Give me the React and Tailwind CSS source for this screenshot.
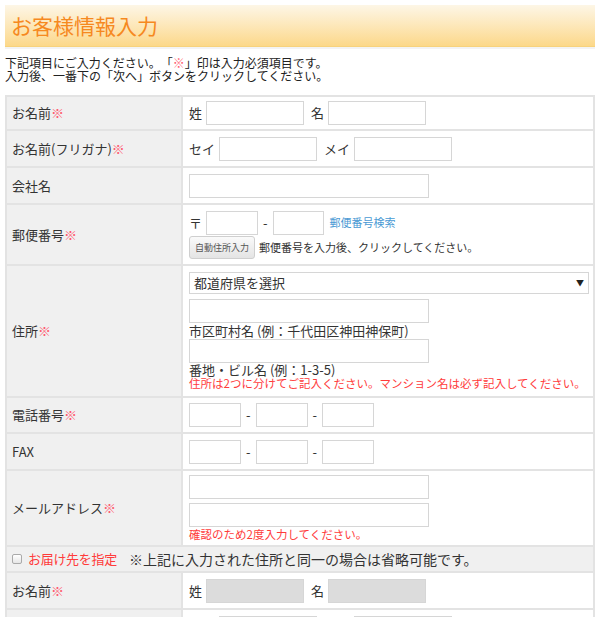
import React from 'react';

const Req = () => <span className="text-[#ff5a6e]">※</span>;

const Input = ({ w = 'w-[98px]', gray = false }) => (
    <input
        type="text"
        className={`${w} h-[24px] border border-[#d6d6d6] ${gray ? 'bg-[#dcdcdc]' : 'bg-white'} outline-none`}
    />
);

// one form row: grey label cell on the left, inputs on the right
const Row = ({ label, required, children, h }) => (
    <div className={`flex ${h} border-b-2 border-[#e3e3e3]`}>
        <div className="w-[176px] shrink-0 bg-[#f0f0f0] border-r-2 border-[#e3e3e3] flex items-center pl-[5px] text-[13px] text-[#333]">
            <span>
                {label}
                {required && <Req />}
            </span>
        </div>
        <div className="flex-1 flex flex-col justify-center pl-[6px] pr-[5px] text-[13px] text-[#333]">{children}</div>
    </div>
);

const Dash = () => <span className="px-[1px]">-</span>;

const App = () => {
    return (
        <div
            className="w-[601px] h-[617px] overflow-hidden bg-white pt-[5px] px-[5px] [text-spacing-trim:space-all]"
            style={{ fontFamily: '"Noto Sans CJK JP", "Noto Sans", sans-serif' }}
        >
            {/* Header */}
            <div className="h-[42px] w-[590px] bg-gradient-to-b from-[#fdf6e6] to-[#fcd889] border-b border-[#f7d27c] flex items-center pl-[6px]">
                <h1 className="text-[21px] text-[#f6891f] font-normal leading-none">お客様情報入力</h1>
            </div>
            <div className="h-[2px] w-[590px] bg-[#f3f3f3]" />

            {/* Intro */}
            <div className="mt-[7px] text-[12px] leading-[13px] text-[#222]">
                <p>下記項目にご入力ください。「<span className="text-[#ff5a6e]">※</span>」印は入力必須項目です。</p>
                <p>入力後、一番下の「次へ」ボタンをクリックしてください。</p>
            </div>

            {/* Form */}
            <div className="mt-[13px] w-[590px] border-t-2 border-x-2 border-[#e3e3e3]">
                <Row label="お名前" required h="h-[34px]">
                    <div className="flex items-center gap-[4px]">
                        <span>姓</span>
                        <Input />
                        <span className="ml-[3px]">名</span>
                        <Input />
                    </div>
                </Row>
                <Row label="お名前(フリガナ)" required h="h-[37px]">
                    <div className="flex items-center gap-[4px]">
                        <span>セイ</span>
                        <Input />
                        <span className="ml-[3px]">メイ</span>
                        <Input />
                    </div>
                </Row>
                <Row label="会社名" h="h-[37px]">
                    <div className="flex">
                        <Input w="w-[240px]" />
                    </div>
                </Row>
                <Row label="郵便番号" required h="h-[61px]">
                    <div className="flex items-center gap-[4px]">
                        <span>〒</span>
                        <Input w="w-[52px]" />
                        <Dash />
                        <Input w="w-[51px]" />
                        <span className="ml-[2px] text-[#4a9ad4] text-[11px]">郵便番号検索</span>
                    </div>
                    <div className="flex items-center gap-[4px] mt-[1px]">
                        <button className="h-[23px] w-[66px] rounded-[3px] border border-[#cfcfcf] bg-gradient-to-b from-[#fafafa] to-[#e4e4e4] text-[9px] leading-none text-[#555]">
                            自動住所入力
                        </button>
                        <span className="text-[11px]">郵便番号を入力後、クリックしてください。</span>
                    </div>
                </Row>
                <Row label="住所" required h="h-[132px]">
                    <div className="h-[22px] w-[400px] border border-[#d6d6d6] flex items-center justify-between px-[4px]">
                        <span className="text-[13px]">都道府県を選択</span>
                        <span className="text-[8px] text-[#222]">▼</span>
                    </div>
                    <div className="flex mt-[5px]">
                        <Input w="w-[240px]" />
                    </div>
                    <div className="text-[13px] leading-[15px]">市区町村名 (例：千代田区神田神保町)</div>
                    <div className="flex mt-[1px]">
                        <Input w="w-[240px]" />
                    </div>
                    <div className="text-[13px] leading-[14px]">番地・ビル名 (例：1-3-5)</div>
                    <div className="text-[11.5px] leading-[13px] whitespace-nowrap text-[#ff3b3b]">
                        住所は2つに分けてご記入ください。マンション名は必ず記入してください。
                    </div>
                </Row>
                <Row label="電話番号" required h="h-[36px]">
                    <div className="flex items-center gap-[4px]">
                        <Input w="w-[52px]" />
                        <Dash />
                        <Input w="w-[52px]" />
                        <Dash />
                        <Input w="w-[52px]" />
                    </div>
                </Row>
                <Row label="FAX" h="h-[37px]">
                    <div className="flex items-center gap-[4px]">
                        <Input w="w-[52px]" />
                        <Dash />
                        <Input w="w-[52px]" />
                        <Dash />
                        <Input w="w-[52px]" />
                    </div>
                </Row>
                <Row label="メールアドレス" required h="h-[76px]">
                    <div className="flex">
                        <Input w="w-[240px]" />
                    </div>
                    <div className="flex mt-[4px]">
                        <Input w="w-[240px]" />
                    </div>
                    <div className="text-[11.5px] leading-[14px] text-[#ff3b3b]">確認のため2度入力してください。</div>
                </Row>
                <div className="h-[26px] bg-[#f0f0f0] border-b-2 border-[#e3e3e3] flex items-center pl-[5px] text-[13px]">
                    <span className="inline-block w-[10px] h-[10px] border border-[#aaa] rounded-[2px] bg-gradient-to-b from-white to-[#e6e6e6] mr-[6px]" />
                    <span className="text-[#ff3b3b] tracking-[-0.3px]">お届け先を指定</span>
                    <span className="ml-[12px] text-[#333] text-[14px]">※上記に入力された住所と同一の場合は省略可能です。</span>
                </div>
                <Row label="お名前" required h="h-[37px]">
                    <div className="flex items-center gap-[4px]">
                        <span>姓</span>
                        <Input gray />
                        <span className="ml-[3px]">名</span>
                        <Input gray />
                    </div>
                </Row>
                <Row label="" h="h-[37px]">
                    <div className="flex items-center gap-[4px]">
                        <span className="invisible">セイ</span>
                        <Input gray />
                        <span className="invisible ml-[3px]">メイ</span>
                        <Input gray />
                    </div>
                </Row>
            </div>
        </div>
    );
};

export default App;
